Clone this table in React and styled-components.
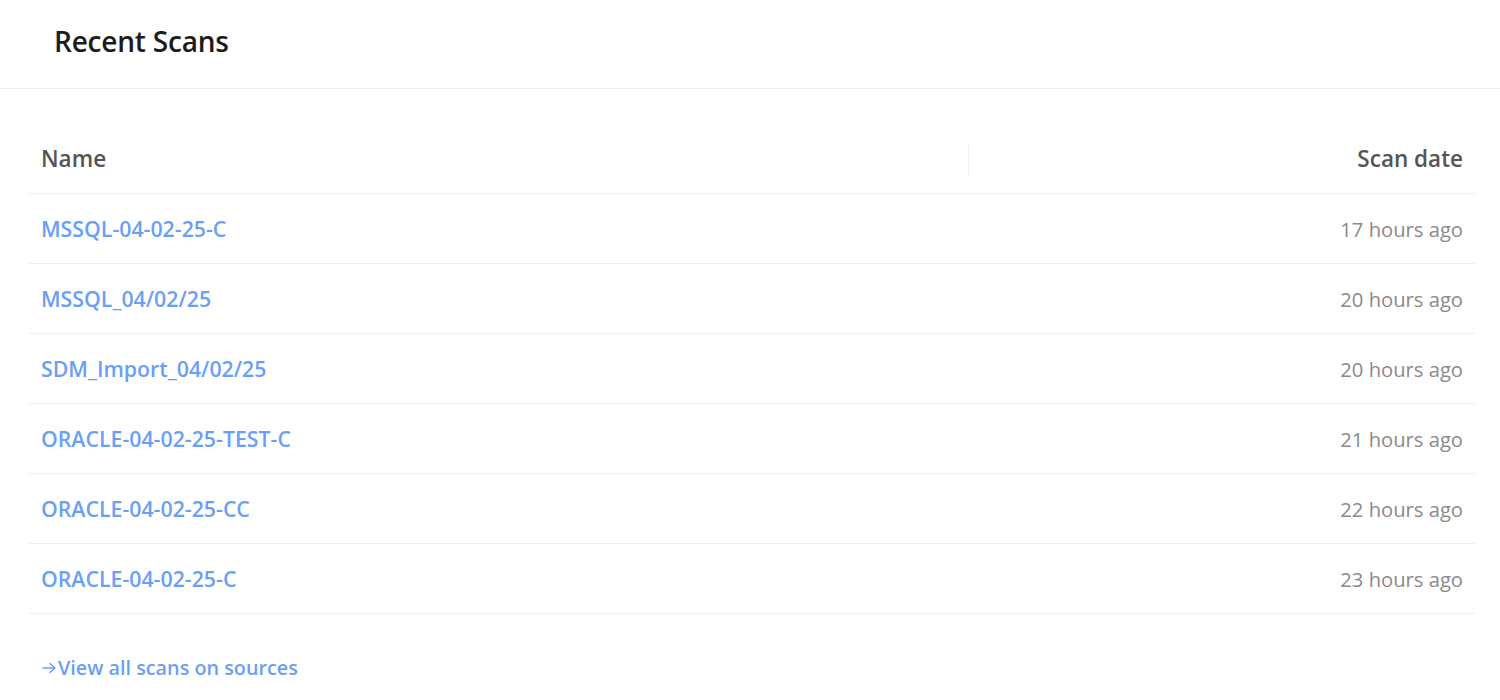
import React from "react";
import styled, { createGlobalStyle } from "styled-components";

const Global = createGlobalStyle`
  html, body { margin: 0; padding: 0; background: #fff; }
  body { font-family: "Open Sans", "Noto Sans", sans-serif; }
`;

const Page = styled.div`
  width: 1500px;
  height: 700px;
  overflow: hidden;
  background: #fff;
`;

const Header = styled.header`
  height: 89px;
  box-sizing: border-box;
  border-bottom: 1px solid #efefef;
  display: flex;
  align-items: center;
  padding: 0 0 6px 54px;
`;

const Title = styled.h1`
  margin: 0;
  font-size: 28px;
  font-weight: 600;
  color: #1c1c1c;
  letter-spacing: -0.2px;
`;

const Body = styled.div`
  padding: 35px 25px 0 29px;
`;

const Table = styled.div`
  display: flex;
  flex-direction: column;
`;

const Row = styled.div`
  display: grid;
  grid-template-columns: 940px 1fr;
  height: 70px;
  box-sizing: border-box;
  border-bottom: 1px solid #efefef;
  align-items: center;
`;

const Cell = styled.div`
  position: relative;
  padding: 0 12px;
  text-align: ${(p) => (p.$right ? "right" : "left")};
  white-space: nowrap;
`;

const HeadCell = styled(Cell)`
  font-size: 22.5px;
  font-weight: 600;
  color: #555555;
  ${(p) =>
    p.$sep &&
    `&::after {
      content: "";
      position: absolute;
      right: 0;
      top: 50%;
      transform: translateY(-50%);
      width: 1px;
      height: 32px;
      background: #f0f0f0;
    }`}
`;

const NameLink = styled.a`
  font-size: 21.3px;
  font-weight: 600;
  color: #6a9ff6;
  text-decoration: none;
`;

const DateText = styled.span`
  font-size: 20.2px;
  color: #8a8a8a;
`;

const Footer = styled.div`
  padding: 40px 0 0 12px;
`;

const ViewAll = styled.a`
  display: inline-flex;
  align-items: center;
  gap: 1px;
  font-size: 19.8px;
  font-weight: 600;
  color: #6a9ff6;
  text-decoration: none;
`;

const Arrow = styled.svg`
  width: 16px;
  height: 16px;
  flex: none;
`;

const scans = [
  ["MSSQL-04-02-25-C", "17 hours ago"],
  ["MSSQL_04/02/25", "20 hours ago"],
  ["SDM_Import_04/02/25", "20 hours ago"],
  ["ORACLE-04-02-25-TEST-C", "21 hours ago"],
  ["ORACLE-04-02-25-CC", "22 hours ago"],
  ["ORACLE-04-02-25-C", "23 hours ago"],
];

export default function App() {
  return (
    <Page>
      <Global />
      <Header>
        <Title>Recent Scans</Title>
      </Header>
      <Body>
        <Table>
          <Row>
            <HeadCell $sep>Name</HeadCell>
            <HeadCell $right>Scan date</HeadCell>
          </Row>
          {scans.map(([name, date]) => (
            <Row key={name}>
              <Cell>
                <NameLink href="#">{name}</NameLink>
              </Cell>
              <Cell $right>
                <DateText>{date}</DateText>
              </Cell>
            </Row>
          ))}
        </Table>
        <Footer>
          <ViewAll href="#">
            <Arrow viewBox="0 0 16 16" fill="none" stroke="currentColor" strokeWidth="1.3" strokeLinecap="round" strokeLinejoin="round">
              <path d="M2 8h12M9 3.5 13.8 8 9 12.5" />
            </Arrow>
            View all scans on sources
          </ViewAll>
        </Footer>
      </Body>
    </Page>
  );
}
